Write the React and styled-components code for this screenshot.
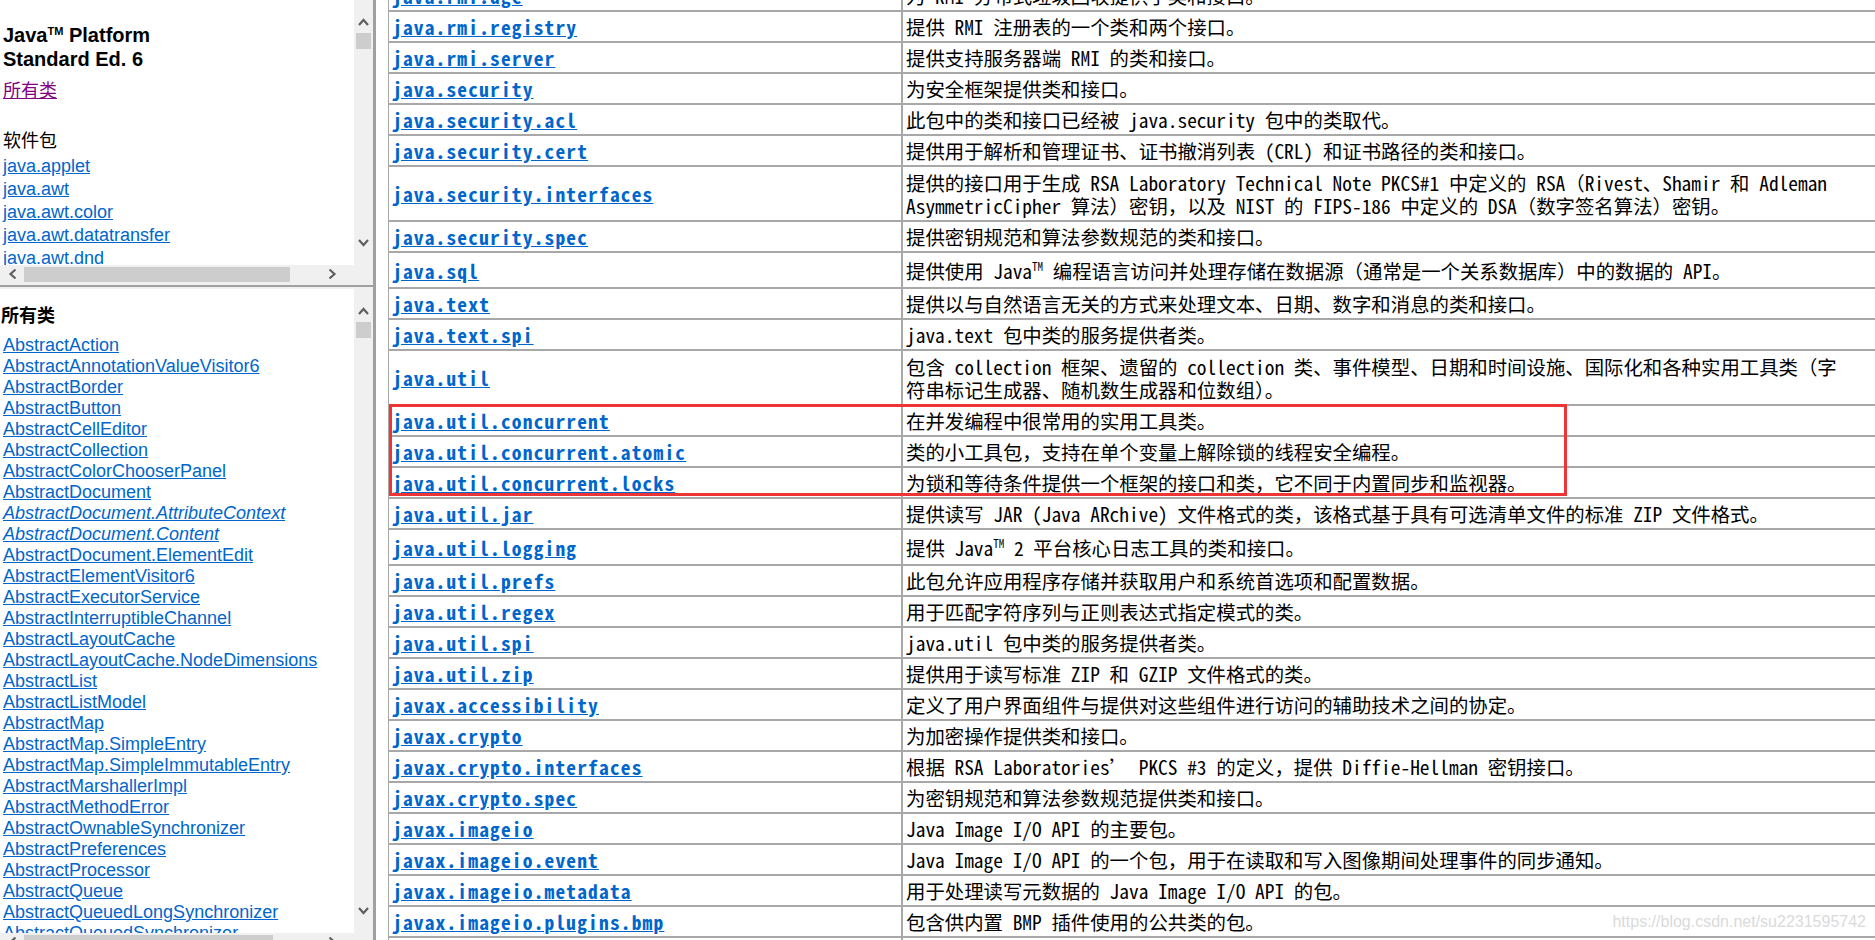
import React from "react";
import styled, { createGlobalStyle } from "styled-components";

const GlobalStyle = createGlobalStyle`
  html, body {
    margin: 0;
    padding: 0;
    background: #fff;
    overflow: hidden;
  }
  body {
    font-family: "Liberation Sans", "Noto Sans CJK SC", sans-serif;
  }
`;

const Screen = styled.div`
  display: flex;
  width: 1875px;
  height: 940px;
  overflow: hidden;
`;

const LeftColumn = styled.div`
  width: 373px;
  flex-shrink: 0;
  display: flex;
  flex-direction: column;
  overflow: hidden;
  background: #f0f0f0;
`;

const FrameDivider = styled.div`
  width: 3px;
  flex-shrink: 0;
  background: #a0a0a0;
`;

const RowDivider = styled.div`
  height: 2px;
  margin: 2px 0;
  flex-shrink: 0;
  background: #a0a0a0;
`;

const Frame = styled.div`
  display: grid;
  grid-template-columns: 354px 19px;
  grid-template-rows: ${props => props.$h}px 18px;
  flex-shrink: 0;
`;

const FrameBody = styled.div`
  background: #fff;
  overflow: hidden;
  padding-left: 3px;
  font-size: 18px;
  color: #000;
`;

const VTrack = styled.div`
  background: #f0f0f0;
  display: flex;
  flex-direction: column;
  align-items: center;
`;

const VButton = styled.div`
  height: 33px;
  width: 100%;
  box-sizing: border-box;
  display: flex;
  justify-content: center;
  align-items: ${props => (props.$down ? "flex-start" : "flex-end")};
  padding: ${props => (props.$down ? "7px 0 0" : "0 0 7px")};
`;

const VThumb = styled.div`
  width: 15px;
  height: 16px;
  background: #cdcdcd;
`;

const Spacer = styled.div`
  flex: 1;
`;

const HTrack = styled.div`
  background: #f0f0f0;
  display: flex;
  align-items: center;
`;

const HButton = styled.div`
  width: ${props => props.$w}px;
  flex-shrink: 0;
  display: flex;
  justify-content: center;
  align-items: center;
`;

const HThumb = styled.div`
  width: ${props => props.$w}px;
  height: 15px;
  flex-shrink: 0;
  background: #cdcdcd;
`;

const Corner = styled.div`
  background: #f0f0f0;
`;

const Title = styled.div`
  margin-top: 23px;
  font-size: 20px;
  font-weight: bold;
  line-height: 24px;
`;

const TitleSup = styled.sup`
  font-size: 11px;
  line-height: 0;
  vertical-align: 7px;
`;

const FrameLink = styled.a`
  display: block;
  width: max-content;
  color: ${props => (props.$visited ? "#800080" : "#0066cc")};
  text-decoration: underline;
  font-style: ${props => (props.$italic ? "italic" : "normal")};
  line-height: ${props => props.$lh || 21}px;
  cursor: pointer;
`;

const AllClassesLink = styled(FrameLink)`
  margin-top: 10px;
`;

const Heading = styled.div`
  margin-top: 29px;
  line-height: 21px;
`;

const ItemList = styled.div`
  margin-top: ${props => props.$mt}px;
`;

const ClassesTitle = styled.div`
  margin: 17px 0 0 -2px;
  font-weight: bold;
  line-height: 21px;
`;

const RightPanel = styled.div`
  position: relative;
  flex: 1;
  overflow: hidden;
  background: #fff;
  padding-left: 12px;
`;

const PackageTable = styled.table`
  border-collapse: separate;
  border-spacing: 0;
  margin-top: -20px;
  width: calc(100% + 10px);
  font-family: "Noto Sans Mono CJK SC", "Noto Sans CJK SC", "Liberation Mono", monospace;
  font-size: 19.4px;
  line-height: 23px;
  color: #000;
`;

const NameCell = styled.td`
  width: 506px;
  height: ${props => props.$h - 8}px;
  padding: 3px;
  border: 1px solid #a8a8a8;
  vertical-align: middle;
  white-space: nowrap;
`;

const DescCell = styled.td`
  padding: 3px;
  border: 1px solid #a8a8a8;
  vertical-align: middle;
  white-space: nowrap;
`;

const PackageLink = styled.a`
  color: #0066cc;
  font-weight: bold;
  letter-spacing: 1.2px;
  text-decoration: underline;
  cursor: pointer;
`;

const DescSup = styled.sup`
  font-size: 11px;
  line-height: 0;
  vertical-align: 8px;
`;

const Highlight = styled.div`
  position: absolute;
  left: 13px;
  top: 404px;
  width: 1178px;
  height: 92px;
  box-sizing: border-box;
  border: 3px solid #ee3535;
  pointer-events: none;
`;

const Watermark = styled.div`
  position: absolute;
  right: 9px;
  top: 912px;
  font-family: "Liberation Sans", sans-serif;
  font-size: 16px;
  line-height: 20px;
  color: #dadada;
`;

const Chevron = ({ dir }) => {
  const rot = { up: 0, right: 90, down: 180, left: 270 }[dir];
  return (
    <svg width="11" height="8" viewBox="0 0 11 8" style={{ transform: `rotate(${rot}deg)` }}>
      <polyline points="1,7 5.5,2 10,7" fill="none" stroke="#606060" strokeWidth="2.2" />
    </svg>
  );
};

const ScrollFrame = ({ height, hThumb, children }) => (
  <Frame $h={height}>
    <FrameBody>{children}</FrameBody>
    <VTrack>
      <VButton>
        <Chevron dir="up" />
      </VButton>
      <VThumb />
      <Spacer />
      <VButton $down>
        <Chevron dir="down" />
      </VButton>
    </VTrack>
    <HTrack>
      <HButton $w={24}>
        <Chevron dir="left" />
      </HButton>
      <HThumb $w={hThumb} />
      <Spacer />
      <HButton $w={44}>
        <Chevron dir="right" />
      </HButton>
    </HTrack>
    <Corner />
  </Frame>
);

const packages = [
  "java.applet",
  "java.awt",
  "java.awt.color",
  "java.awt.datatransfer",
  "java.awt.dnd",
  "java.awt.event",
];

const classes = [
  "AbstractAction",
  "AbstractAnnotationValueVisitor6",
  "AbstractBorder",
  "AbstractButton",
  "AbstractCellEditor",
  "AbstractCollection",
  "AbstractColorChooserPanel",
  "AbstractDocument",
  "*AbstractDocument.AttributeContext",
  "*AbstractDocument.Content",
  "AbstractDocument.ElementEdit",
  "AbstractElementVisitor6",
  "AbstractExecutorService",
  "AbstractInterruptibleChannel",
  "AbstractLayoutCache",
  "AbstractLayoutCache.NodeDimensions",
  "AbstractList",
  "AbstractListModel",
  "AbstractMap",
  "AbstractMap.SimpleEntry",
  "AbstractMap.SimpleImmutableEntry",
  "AbstractMarshallerImpl",
  "AbstractMethodError",
  "AbstractOwnableSynchronizer",
  "AbstractPreferences",
  "AbstractProcessor",
  "AbstractQueue",
  "AbstractQueuedLongSynchronizer",
  "AbstractQueuedSynchronizer",
  "AbstractSelectableChannel",
];

const rows = [
  { name: "java.rmi.dgc", desc: "为 RMI 分布式垃圾回收提供了类和接口。" },
  { name: "java.rmi.registry", desc: "提供 RMI 注册表的一个类和两个接口。" },
  { name: "java.rmi.server", desc: "提供支持服务器端 RMI 的类和接口。" },
  { name: "java.security", desc: "为安全框架提供类和接口。" },
  { name: "java.security.acl", desc: "此包中的类和接口已经被 java.security 包中的类取代。" },
  { name: "java.security.cert", desc: "提供用于解析和管理证书、证书撤消列表 (CRL) 和证书路径的类和接口。" },
  {
    name: "java.security.interfaces",
    h: 55,
    desc: [
      "提供的接口用于生成 RSA Laboratory Technical Note PKCS#1 中定义的 RSA（Rivest、Shamir 和 Adleman",
      "AsymmetricCipher 算法）密钥，以及 NIST 的 FIPS-186 中定义的 DSA（数字签名算法）密钥。",
    ],
  },
  { name: "java.security.spec", desc: "提供密钥规范和算法参数规范的类和接口。" },
  {
    name: "java.sql",
    h: 36,
    desc: (
      <>
        提供使用 Java<DescSup>TM</DescSup> 编程语言访问并处理存储在数据源（通常是一个关系数据库）中的数据的 API。
      </>
    ),
  },
  { name: "java.text", desc: "提供以与自然语言无关的方式来处理文本、日期、数字和消息的类和接口。" },
  { name: "java.text.spi", desc: "java.text 包中类的服务提供者类。" },
  {
    name: "java.util",
    h: 55,
    desc: [
      "包含 collection 框架、遗留的 collection 类、事件模型、日期和时间设施、国际化和各种实用工具类（字",
      "符串标记生成器、随机数生成器和位数组）。",
    ],
  },
  { name: "java.util.concurrent", desc: "在并发编程中很常用的实用工具类。" },
  { name: "java.util.concurrent.atomic", desc: "类的小工具包，支持在单个变量上解除锁的线程安全编程。" },
  { name: "java.util.concurrent.locks", desc: "为锁和等待条件提供一个框架的接口和类，它不同于内置同步和监视器。" },
  { name: "java.util.jar", desc: "提供读写 JAR (Java ARchive) 文件格式的类，该格式基于具有可选清单文件的标准 ZIP 文件格式。" },
  {
    name: "java.util.logging",
    h: 36,
    desc: (
      <>
        提供 Java<DescSup>TM</DescSup> 2 平台核心日志工具的类和接口。
      </>
    ),
  },
  { name: "java.util.prefs", desc: "此包允许应用程序存储并获取用户和系统首选项和配置数据。" },
  { name: "java.util.regex", desc: "用于匹配字符序列与正则表达式指定模式的类。" },
  { name: "java.util.spi", desc: "java.util 包中类的服务提供者类。" },
  { name: "java.util.zip", desc: "提供用于读写标准 ZIP 和 GZIP 文件格式的类。" },
  { name: "javax.accessibility", desc: "定义了用户界面组件与提供对这些组件进行访问的辅助技术之间的协定。" },
  { name: "javax.crypto", desc: "为加密操作提供类和接口。" },
  { name: "javax.crypto.interfaces", desc: "根据 RSA Laboratories’ PKCS #3 的定义，提供 Diffie-Hellman 密钥接口。" },
  { name: "javax.crypto.spec", desc: "为密钥规范和算法参数规范提供类和接口。" },
  { name: "javax.imageio", desc: "Java Image I/O API 的主要包。" },
  { name: "javax.imageio.event", desc: "Java Image I/O API 的一个包，用于在读取和写入图像期间处理事件的同步通知。" },
  { name: "javax.imageio.metadata", desc: "用于处理读写元数据的 Java Image I/O API 的包。" },
  { name: "javax.imageio.plugins.bmp", desc: "包含供内置 BMP 插件使用的公共类的包。" },
  { name: "javax.imageio.plugins.jpeg", desc: "支持内置 JPEG 插件的类。" },
];

const renderDesc = desc =>
  Array.isArray(desc)
    ? desc.map((line, i) => (
        <React.Fragment key={i}>
          {i > 0 && <br />}
          {line}
        </React.Fragment>
      ))
    : desc;

export default function App() {
  return (
    <>
      <GlobalStyle />
      <Screen>
        <LeftColumn>
          <ScrollFrame height={265} hThumb={266}>
            <Title>
              Java<TitleSup>TM</TitleSup> Platform
              <br />
              Standard Ed. 6
            </Title>
            <AllClassesLink $visited>所有类</AllClassesLink>
            <Heading>软件包</Heading>
            <ItemList $mt={3}>
              {packages.map(p => (
                <FrameLink key={p} $lh={23}>
                  {p}
                </FrameLink>
              ))}
            </ItemList>
          </ScrollFrame>
          <RowDivider />
          <ScrollFrame height={644} hThumb={249}>
            <ClassesTitle>所有类</ClassesTitle>
            <ItemList $mt={8}>
              {classes.map(c => {
                const italic = c.startsWith("*");
                return (
                  <FrameLink key={c} $italic={italic}>
                    {italic ? c.slice(1) : c}
                  </FrameLink>
                );
              })}
            </ItemList>
          </ScrollFrame>
        </LeftColumn>
        <FrameDivider />
        <RightPanel>
          <PackageTable>
            <tbody>
              {rows.map(r => (
                <tr key={r.name}>
                  <NameCell $h={r.h || 31}>
                    <PackageLink>{r.name}</PackageLink>
                  </NameCell>
                  <DescCell>{renderDesc(r.desc)}</DescCell>
                </tr>
              ))}
            </tbody>
          </PackageTable>
          <Highlight />
          <Watermark>https://blog.csdn.net/su2231595742</Watermark>
        </RightPanel>
      </Screen>
    </>
  );
}
